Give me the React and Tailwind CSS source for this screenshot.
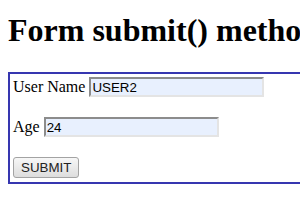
import React from "react";

const inputCls =
  "h-[20px] w-[175px] bg-[#e8f0fe] border-2 border-t-[#8c8c8c] border-l-[#8c8c8c] border-b-[#e4e4e4] border-r-[#e4e4e4] px-[1px] text-[13.33px] leading-[15px] text-black outline-none font-['Liberation_Sans',Arial,sans-serif]";

export default function App() {
  return (
    <div className="w-[300px] h-[210px] overflow-hidden bg-white px-2 pt-[12px] text-black">
      {/* Heading, cut by the right edge as in the screenshot */}
      <h1 className="font-['Liberation_Serif',serif] font-bold text-[32px] leading-[37px] whitespace-nowrap mb-[23px]">
        Form submit() method
      </h1>

      {/* Form box, its right side runs off the page */}
      <form
        onSubmit={(e) => e.preventDefault()}
        className="w-[360px] border-2 border-r-0 border-[#3636b0] pl-[3px] pt-[3px] pb-[4px] flex flex-col gap-[20px] font-['Liberation_Serif',serif] text-[16px]"
      >
        <div className="flex items-center gap-[4px] h-[20px]">
          <span className="leading-[20px]">User Name</span>
          <input type="text" defaultValue="USER2" className={inputCls} />
        </div>

        <div className="flex items-center gap-[4px] h-[20px]">
          <span className="leading-[20px]">Age</span>
          <input type="text" defaultValue="24" className={inputCls} />
        </div>

        <div className="flex h-[21px]">
          <button
            type="submit"
            className="h-[21px] px-[7px] border border-[#a3a3a3] rounded-[3px] bg-gradient-to-b from-[#f7f7f7] to-[#dddddd] text-[13.33px] leading-[15px] text-[#222] font-['Liberation_Sans',Arial,sans-serif]"
          >
            SUBMIT
          </button>
        </div>
      </form>
    </div>
  );
}
